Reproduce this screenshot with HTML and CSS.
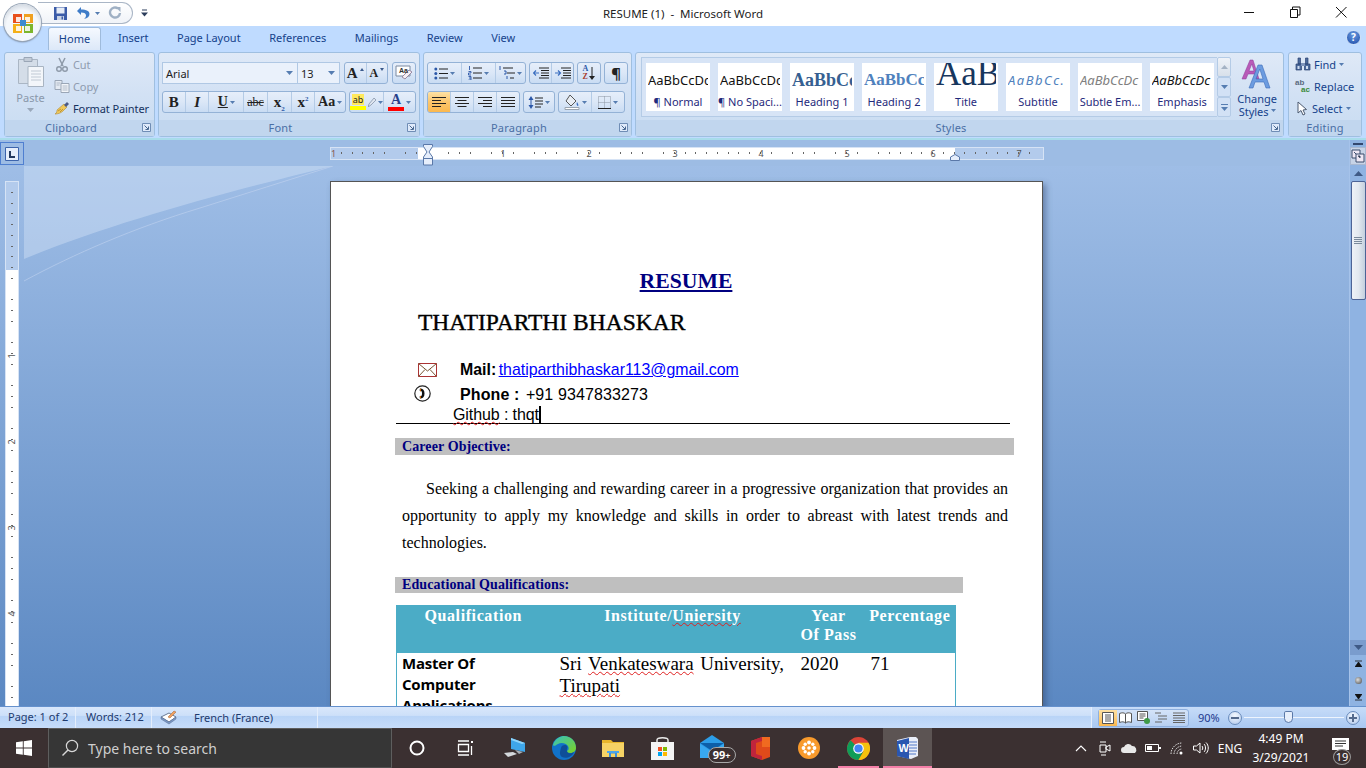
FILE: index.html
```html
<!DOCTYPE html>
<html lang="en">
<head>
  <meta charset="UTF-8">
  <title>RESUME (1) - Microsoft Word</title>
  <link rel="stylesheet" href="styles.css">
</head>
<body>

<svg class="defs" width="0" height="0">
  <symbol id="launch" viewBox="0 0 9 9"><path d="M.5.5h8v8h-8z" fill="#dfeafa" stroke="#6f8db5"/><path d="M2.5 2.5l3.5 3.5M6.5 3.5v3h-3" fill="none" stroke="#47678f"/></symbol>
  <symbol id="drop" viewBox="0 0 7 4"><path d="M0 0h7L3.5 4z" fill="#567db1"/></symbol>
</svg>

<!-- barra de titulo -->
<header class="titlebar">
  <div class="office-btn">
    <svg width="26" height="24" viewBox="0 0 24 24">
      <path d="M2 3h9v9H2z" fill="#e8501c"/><path d="M13 3h9v9h-9z" fill="#f0a020"/><path d="M2 13h9v9H2z" fill="#f4b018"/><path d="M13 13h9v9h-9z" fill="#7cb52c"/>
      <path d="M5 6h5v5H5zM14 15h5v5h-5zM5 15h5v5H5zM14 6h5v5h-5z" fill="#fff" fill-opacity=".85"/>
      <path d="M9 9h6v6H9z" fill="#3c8ad0"/>
    </svg>
  </div>
  <div class="qat">
    <svg width="15" height="15" viewBox="0 0 15 15"><path d="M1 1h13v13H1z" fill="#3c5ca8"/><path d="M3.5 1.5h8v6h-8z" fill="#e6ecf6"/><path d="M4 10h7v4H4z" fill="#c8d2e4"/><path d="M8.5 10.5h1.5v3H8.5z" fill="#3c5ca8"/></svg>
    <svg class="qat-undo" width="15" height="14" viewBox="0 0 15 14"><path d="M5 1L1 5l4 4V6.500c3.500 0 5 1 5 3 0 1.500-.8 2.600-2 3.500 3.500-.5 5.500-2.500 5.500-5 0-3-3-4.500-8.500-4.500z" fill="#3f7cc8"/></svg>
    <svg class="qat-drop" width="5" height="3"><use href="#drop"/></svg>
    <svg class="qat-redo" width="14" height="14" viewBox="0 0 14 14"><path d="M10 2.500A5 5 0 1 0 12 7" fill="none" stroke="#9fb0c4" stroke-width="2.400"/><path d="M7.500 1h5v5z" fill="#9fb0c4"/></svg>
  </div>
  <svg class="qat-more" width="7" height="8" viewBox="0 0 7 8"><path d="M1 1h5" stroke="#2c3e5c"/><path d="M0 3.500h7L3.500 7.500z" fill="#2c3e5c"/></svg>
  <div class="title">RESUME (1)&nbsp; -&nbsp; Microsoft Word</div>
  <div class="winctrls">
    <svg width="46" height="12"><path d="M18 6.500h10" stroke="#111"/></svg>
    <svg width="46" height="12"><path d="M18.500 3.500h7v8h-7zM20.500 3.500v-2.500h7.500v8h-2.500" fill="none" stroke="#111"/></svg>
    <svg width="46" height="12"><path d="M18 1l10.500 10.500M28.500 1L18 11.500" stroke="#111" fill="none"/></svg>
  </div>
</header>

<!-- pestañas -->
<nav class="tabs">
  <span class="tab active">Home</span>
  <span class="tab">Insert</span>
  <span class="tab">Page Layout</span>
  <span class="tab">References</span>
  <span class="tab">Mailings</span>
  <span class="tab">Review</span>
  <span class="tab">View</span>
  <span class="help">?</span>
</nav>

<!-- cinta -->
<section class="ribbon">

  <div class="group g-clip">
    <div class="group-body clip-body">
      <div class="paste">
        <svg width="28" height="32" viewBox="0 0 28 32">
          <path d="M1.500 3.500h19v24h-19z" fill="#d4dde8" stroke="#aab6c4"/>
          <path d="M7 1.500h8v4H7z" fill="#c3ccd8" stroke="#9aa6b6"/>
          <path d="M11 10.500h15.500v20H11z" fill="#f3f6fa" stroke="#a8b4c2"/>
          <path d="M14 15h10M14 18h10M14 21h10M14 24h10" stroke="#c0c9d4"/>
        </svg>
        <span class="paste-label">Paste</span>
        <svg width="7" height="4" viewBox="0 0 7 4"><path d="M0 0h7L3.500 4z" fill="#9aa8ba"/></svg>
      </div>
      <div class="clip-list">
        <div class="clip-row off">
          <svg width="14" height="15" viewBox="0 0 14 15"><path d="M4 1l4 8M10 1L6 9" stroke="#8d99a8" stroke-width="1.500" fill="none"/><circle cx="4" cy="12" r="2.300" fill="none" stroke="#8d99a8" stroke-width="1.400"/><circle cx="10" cy="12" r="2.300" fill="none" stroke="#8d99a8" stroke-width="1.400"/></svg>
          <span>Cut</span>
        </div>
        <div class="clip-row off">
          <svg width="15" height="13" viewBox="0 0 15 13"><path d="M.5.500h7v9h-7z" fill="#e4eaf2" stroke="#9aa6b6"/><path d="M6.500 3.500h8v9h-8z" fill="#f2f5f9" stroke="#9aa6b6"/><path d="M8 6h5M8 8h5M8 10h5M2 3h4M2 5h3" stroke="#b0bac8"/></svg>
          <span>Copy</span>
        </div>
        <div class="clip-row">
          <svg width="16" height="14" viewBox="0 0 16 14"><path d="M10 3l3 3-4 4c-2 2-5 3-8 3 2-1 2-3 2-4z" fill="#f0c85a" stroke="#b08a30" stroke-width=".6"/><path d="M10 4l3-3 2 2-3 3z" fill="#4a5a88"/><path d="M4 10l3-2M6 11l3-3" stroke="#a88028" stroke-width=".7"/></svg>
          <span>Format Painter</span>
        </div>
      </div>
    </div>
    <div class="group-label">Clipboard<svg class="launch"><use href="#launch"/></svg></div>
  </div>

  <div class="group g-font">
    <div class="group-body tool-rows">
      <div class="tool-row">
        <div class="combo font-name"><span>Arial</span><svg width="7" height="4"><use href="#drop"/></svg></div>
        <div class="combo font-size"><span>13</span><svg width="7" height="4"><use href="#drop"/></svg></div>
        <div class="btn-set grow-set">
          <span class="seg glyph big">A<i class="up"></i></span>
          <span class="seg glyph small">A<i class="dn"></i></span>
        </div>
        <div class="btn-set clear-set">
          <span class="seg">
            <svg width="19" height="16" viewBox="0 0 19 16"><path d="M1 1h14v10H1z" fill="#fff" stroke="#7a8aa0"/><path d="M10 14l7-7-3-2-7 7z" fill="#f6f0f4" stroke="#9a8aa4"/></svg>
            <b class="clear-text">Aa</b>
          </span>
        </div>
      </div>
      <div class="tool-row">
        <div class="btn-set format-set">
          <span class="seg glyph w22"><b>B</b></span>
          <span class="seg glyph w24"><em>I</em></span>
          <span class="seg glyph w35"><u>U</u><svg width="5" height="3"><use href="#drop"/></svg></span>
          <span class="seg glyph w24 strike">abc</span>
          <span class="seg glyph w24"><b>x<sub>2</sub></b></span>
          <span class="seg glyph w24"><b>x<sup>2</sup></b></span>
          <span class="seg glyph w31 case">Aa<svg width="5" height="3"><use href="#drop"/></svg></span>
        </div>
        <div class="btn-set color-set">
          <span class="seg w34">
            <span class="swatch"><small>ab</small><i class="bar yellow"></i></span>
            <svg width="8" height="9" viewBox="0 0 8 9"><path d="M6 0l2 2-5 5-3 2 1-3z" fill="#dfe6f0" stroke="#7a8aa0" stroke-width=".7"/></svg>
            <svg width="5" height="3"><use href="#drop"/></svg>
          </span>
          <span class="seg w33">
            <span class="swatch"><b class="font-a">A</b><i class="bar red"></i></span>
            <svg width="5" height="3"><use href="#drop"/></svg>
          </span>
        </div>
      </div>
    </div>
    <div class="group-label">Font<svg class="launch"><use href="#launch"/></svg></div>
  </div>

  <div class="group g-para">
    <div class="group-body tool-rows">
      <div class="tool-row gap3">
        <div class="btn-set">
          <span class="seg w33">
            <svg width="14" height="13" viewBox="0 0 14 13"><path d="M5 2h9M5 6.500h9M5 11h9" stroke="#222" /><circle cx="1.800" cy="2" r="1.500" fill="#2c58a8"/><circle cx="1.800" cy="6.500" r="1.500" fill="#2c58a8"/><circle cx="1.800" cy="11" r="1.500" fill="#2c58a8"/></svg>
            <svg width="5" height="3"><use href="#drop"/></svg>
          </span>
          <span class="seg w34">
            <svg width="14" height="14" viewBox="0 0 14 14"><path d="M5 2h9M5 7h9M5 12h9" stroke="#222"/><path d="M1.500 0v4M.5 5.500h2.500v1.500H.5V9H3M.5 10.500H3V12H1M3 12v2H.5" fill="none" stroke="#2c58a8" stroke-width=".9"/></svg>
            <svg width="5" height="3"><use href="#drop"/></svg>
          </span>
          <span class="seg w30">
            <svg width="16" height="14" viewBox="0 0 16 14"><path d="M4 2h10M8 7h8M11 12h4" stroke="#222"/><path d="M1 0v4M5 5h2v3H5M8 10v3" fill="none" stroke="#2c58a8"/></svg>
            <svg width="5" height="3"><use href="#drop"/></svg>
          </span>
        </div>
        <div class="btn-set">
          <span class="seg w21">
            <svg width="16" height="13" viewBox="0 0 16 13"><path d="M6 1h10M8 3.500h8M8 6h8M8 8.500h8M6 11h10" stroke="#222"/><path d="M6 6H1M3 3.500L.5 6 3 8.500" fill="none" stroke="#3a6ec0" stroke-width="1.200"/></svg>
          </span>
          <span class="seg w22">
            <svg width="16" height="13" viewBox="0 0 16 13"><path d="M6 1h10M8 3.500h8M8 6h8M8 8.500h8M6 11h10" stroke="#222"/><path d="M0 6h5M3 3.500L5.500 6 3 8.500" fill="none" stroke="#3a6ec0" stroke-width="1.200"/></svg>
          </span>
        </div>
        <div class="btn-set">
          <span class="seg w22 sort"><span class="az"><i>A</i><i>Z</i></span><svg width="6" height="13" viewBox="0 0 6 13"><path d="M3 0v11" stroke="#222"/><path d="M0 9h6l-3 4z" fill="#222"/></svg></span>
        </div>
        <div class="btn-set">
          <span class="seg w22 pilcrow">¶</span>
        </div>
      </div>
      <div class="tool-row gap3">
        <div class="btn-set">
          <span class="seg w22 on"><svg width="14" height="11" viewBox="0 0 14 11"><path d="M0 .5h14M0 3.500h9M0 6.500h14M0 9.500h9" stroke="#222"/></svg></span>
          <span class="seg w23"><svg width="14" height="11" viewBox="0 0 14 11"><path d="M0 .5h14M2.500 3.500h9M0 6.500h14M2.500 9.500h9" stroke="#222"/></svg></span>
          <span class="seg w23"><svg width="14" height="11" viewBox="0 0 14 11"><path d="M0 .5h14M5 3.500h9M0 6.500h14M5 9.500h9" stroke="#222"/></svg></span>
          <span class="seg w23"><svg width="14" height="11" viewBox="0 0 14 11"><path d="M0 .5h14M0 3.500h14M0 6.500h14M0 9.500h14" stroke="#222"/></svg></span>
        </div>
        <div class="btn-set">
          <span class="seg w30">
            <svg width="15" height="15" viewBox="0 0 15 15"><path d="M3 1L.5 5h5zM3 14L.5 10h5z" fill="#2c58a8"/><path d="M3 4v7" stroke="#2c58a8"/><path d="M7 3h8M7 6h8M7 9h8M7 12h6" stroke="#222"/></svg>
            <svg width="5" height="3"><use href="#drop"/></svg>
          </span>
        </div>
        <div class="btn-set">
          <span class="seg w32">
            <svg width="16" height="16" viewBox="0 0 16 16"><path d="M6 1l6 6-5 5-5-5z" fill="#e8edf4" stroke="#555"/><path d="M13 8c1 2 2 3 1 4-1 0-2-2-1-4z" fill="#3a6ec0"/><path d="M1 13.500h14v2H1z" fill="#fff" stroke="#9aa4b0"/></svg>
            <svg width="5" height="3"><use href="#drop"/></svg>
          </span>
          <span class="seg w33">
            <svg width="13" height="13" viewBox="0 0 13 13"><path d="M.5.500h12v12H.5zM6.500.5v12M.5 6.500h12" fill="none" stroke="#8a94a2" stroke-dasharray="1 1"/><path d="M0 12.500h13" stroke="#222"/></svg>
            <svg width="5" height="3"><use href="#drop"/></svg>
          </span>
        </div>
      </div>
    </div>
    <div class="group-label">Paragraph<svg class="launch"><use href="#launch"/></svg></div>
  </div>

  <div class="group g-styles">
    <div class="group-body styles-body">
      <div class="gallery">
        <div class="tile"><span class="sample s-normal">AaBbCcDc</span><span class="cap">¶ Normal</span></div>
        <div class="tile"><span class="sample s-normal">AaBbCcDc</span><span class="cap">¶ No Spaci...</span></div>
        <div class="tile"><span class="sample s-h1">AaBbCc</span><span class="cap">Heading 1</span></div>
        <div class="tile"><span class="sample s-h2">AaBbCc</span><span class="cap">Heading 2</span></div>
        <div class="tile"><span class="sample s-title">AaB</span><span class="cap">Title</span></div>
        <div class="tile"><span class="sample s-sub">AaBbCc.</span><span class="cap">Subtitle</span></div>
        <div class="tile"><span class="sample s-subtle">AaBbCcDc</span><span class="cap">Subtle Em...</span></div>
        <div class="tile"><span class="sample s-emph">AaBbCcDc</span><span class="cap">Emphasis</span></div>
      </div>
      <div class="gallery-scroll">
        <span class="off-up"><svg width="7" height="4" viewBox="0 0 7 4"><path d="M0 4h7L3.500 0z" fill="#a4b2c4"/></svg></span>
        <span><svg width="7" height="4"><use href="#drop"/></svg></span>
        <span class="more"><svg width="7" height="7" viewBox="0 0 7 7"><path d="M0 .5h7" stroke="#567db1"/><path d="M0 3h7L3.500 7z" fill="#567db1"/></svg></span>
      </div>
      <div class="change-styles">
        <svg width="32" height="30" viewBox="0 0 32 30">
          <path d="M1 20L9 1h3l6 19h-3l-1.500-5H7l-2 5zM8 12h5l-2.200-7z" fill="#b85ab8" stroke="#8a3a98" stroke-width=".5"/>
          <path d="M8 29L17 6h4l8 23h-4l-2-6h-9l-2 6zM15 20h7l-3.200-10z" fill="#6c9ce0" stroke="#3c6cb8" stroke-width=".6"/>
        </svg>
        <span>Change</span>
        <span>Styles <svg width="5" height="3"><use href="#drop"/></svg></span>
      </div>
    </div>
    <div class="group-label">Styles<svg class="launch"><use href="#launch"/></svg></div>
  </div>

  <div class="group g-edit">
    <div class="group-body edit-body">
      <div class="edit-row">
        <svg width="16" height="14" viewBox="0 0 16 14"><path d="M1 7h5.500v6H1zM9.500 7H15v6H9.500zM3 1h2.500v6H3zM10.500 1H13v6h-2.500z" fill="#4c6a9c" stroke="#2c4272" stroke-width=".7"/><path d="M6 6h4v3H6z" fill="#7e94ba"/><path d="M2.500 9h2v3h-2zM11 9h2v3h-2z" fill="#cfdcf0"/></svg>
        <span>Find</span><svg width="5" height="3"><use href="#drop"/></svg>
      </div>
      <div class="edit-row">
        <span class="replace-ico"><i>ab</i><i class="ac">ac</i></span>
        <span>Replace</span>
      </div>
      <div class="edit-row">
        <svg width="14" height="15" viewBox="0 0 14 15"><path d="M3 1v11l3-2.500 2 4.500 2-1-2-4 3.500-.5z" fill="#fff" stroke="#4c5a70"/></svg>
        <span>Select</span><svg width="5" height="3"><use href="#drop"/></svg>
      </div>
    </div>
    <div class="group-label no-launch">Editing</div>
  </div>
</section>

<!-- area de trabajo -->
<main class="workspace">
  <div class="ruler-row">
    <div class="tab-stop"><svg width="14" height="14" viewBox="0 0 14 14"><path d="M.5.500h13v13H.5z" fill="#e6eefb" stroke="#3c64ac"/><path d="M5 4v6h5" fill="none" stroke="#23395f" stroke-width="2"/></svg></div>
    <div class="h-ruler">
      <span class="rn first">1</span>
      <span class="rn">1</span><span class="rn">2</span><span class="rn">3</span><span class="rn">4</span><span class="rn">5</span><span class="rn">6</span><span class="rn">7</span>
      <svg class="indent-l" width="10" height="22" viewBox="0 0 10 22"><path d="M.5.500h9v2L6 8l3.500 5v8h-9v-8L4 8 .5 2.500z" fill="#e6eefb" stroke="#5a78a8"/><path d="M.5 14.500h9" stroke="#5a78a8"/></svg>
      <svg class="indent-r" width="10" height="7" viewBox="0 0 10 7"><path d="M.5 6.500V3L5 .5 9.500 3v3.500z" fill="#e6eefb" stroke="#5a78a8"/></svg>
    </div>
  </div>

  <div class="v-ruler">
    <div class="v-track">
      <span class="vn"><i>1</i></span><span class="vn"><i>2</i></span><span class="vn"><i>3</i></span><span class="vn"><i>4</i></span>
    </div>
  </div>

  <div class="canvas">
    <svg class="swoosh" width="310" height="120" viewBox="0 0 310 120">
      <path d="M0 0h309C210 24 90 56 0 93z" fill="#d6e4f7" fill-opacity=".42"/>
      <path d="M0 115C50 88 110 62 176 42 220 28 265 14 309 0" fill="none" stroke="#c4d6f0" stroke-opacity=".55"/>
    </svg>

    <article class="page">
      <h1 class="doc-title">RESUME</h1>
      <h2 class="doc-name">THATIPARTHI BHASKAR</h2>

      <div class="contact c-mail">
        <svg class="c-ico" width="20" height="14" viewBox="0 0 20 14"><path d="M.5.500h18v13H.5z" fill="#fff" stroke="#a33"/><path d="M.5.500L9.500 8l9-7.500M.5 13.500L7 6.500M18.500 13.500L12 6.500" fill="none" stroke="#753"/></svg>
        <span><b>Mail:</b> <a class="link">thatiparthibhaskar113@gmail.com</a></span>
      </div>
      <div class="contact c-phone">
        <svg class="c-ico" width="17" height="17" viewBox="0 0 17 17"><circle cx="8.500" cy="8.500" r="7.700" fill="#fff" stroke="#222" stroke-width="1.200"/><path d="M6 3.500c3 0 4.500 1.500 4.500 5s-1.500 5-4.500 5l-.5-2c2 0 2.500-1 2.500-3s-.5-3-2.500-3z" fill="#111"/><path d="M6 3.800l1-.2v2.600l-1 .2zM6 10.800l1 .2v2.300l-1 .2z" fill="#c60"/></svg>
        <span><b>Phone :</b> +91 9347833273</span>
      </div>
      <div class="github"><span class="spell">Github</span> : thqt<span class="caret"></span></div>

      <div class="section-bar">Career Objective:</div>
      <p class="objective">Seeking a challenging and rewarding career in a progressive organization that provides an opportunity to apply my knowledge and skills in order to abreast with latest trends and technologies.</p>

      <div class="section-bar short">Educational Qualifications:</div>
      <table class="edu">
        <colgroup><col class="c1"><col class="c2"><col class="c3"><col class="c4"></colgroup>
        <thead>
          <tr>
            <th class="h1">Qualification</th>
            <th class="h2">Institute/<span class="spell">Uniersity</span></th>
            <th class="year">Year<br><span>Of Pass</span></th>
            <th>Percentage</th>
          </tr>
        </thead>
        <tbody>
          <tr>
            <td class="degree">Master Of<br>Computer<br>Applications</td>
            <td class="inst"><span class="spell-tight">Sri <span class="spell">Venkateswara</span> University,</span><br><span class="spell">Tirupati</span></td>
            <td>2020</td>
            <td>71</td>
          </tr>
        </tbody>
      </table>
    </article>
  </div>

  <aside class="scrollbar">
    <span class="split"></span>
    <span class="ruler-toggle"><svg width="14" height="14" viewBox="0 0 14 14"><path d="M1 1h8v8H1z" fill="#efe8f4" stroke="#3a4c6c"/><path d="M5 5h8v8H5z" fill="#efe8f4" stroke="#3a4c6c"/><path d="M3 3l2 2M7 7h2v2" stroke="#3a4c6c"/></svg></span>
    <span class="sb-up"><svg width="9" height="5" viewBox="0 0 9 5"><path d="M0 5h9L4.500 0z" fill="#3f5a86"/></svg></span>
    <span class="thumb"><i></i></span>
    <span class="sb-fill"></span>
    <span class="sb-down"><svg width="9" height="5" viewBox="0 0 9 5"><path d="M0 0h9L4.500 5z" fill="#3f5a86"/></svg></span>
    <span class="sb-nav"><svg width="7" height="7" viewBox="0 0 7 7"><path d="M0 1h7M0 7h7L3.500 2z" stroke="#111" fill="#111" stroke-width=".8"/></svg></span>
    <span class="sb-nav"><i class="dot"></i></span>
    <span class="sb-nav"><svg width="7" height="7" viewBox="0 0 7 7"><path d="M0 6h7M0 0h7L3.500 5z" stroke="#111" fill="#111" stroke-width=".8"/></svg></span>
  </aside>
</main>

<!-- barra de estado -->
<footer class="statusbar">
  <span class="st w76">Page: 1 of 2</span>
  <span class="st w76 words">Words: 212</span>
  <span class="st lang">
    <svg width="17" height="15" viewBox="0 0 17 15"><path d="M1 7l8-4 7 4-7 5z" fill="#fff" stroke="#6a7a94"/><path d="M1 7v2l8 5 7-5V7l-7 5z" fill="#7a98c8" stroke="#5a6c8c" stroke-width=".5"/><path d="M8 7l6-6 2 1-6 6z" fill="#f0a060" stroke="#a06030" stroke-width=".5"/></svg>
    <span>French (France)</span>
  </span>
  <span class="st spring"></span>
  <div class="st-right">
    <div class="views">
      <span class="on"><svg width="12" height="12" viewBox="0 0 12 12"><path d="M.5.500h11v11H.5z" fill="#fff" stroke="#555"/><path d="M3 3h6M3 5h6M3 7h6M3 9h6" stroke="#555"/></svg></span>
      <span><svg width="13" height="12" viewBox="0 0 13 12"><path d="M.5 1.500C3 .5 5 .5 6.500 2 8 .5 10 .5 12.500 1.500v9C10 9.500 8 9.500 6.500 11 5 9.500 3 9.500.5 10.500z" fill="#fff" stroke="#555"/><path d="M6.500 2v9" stroke="#555"/></svg></span>
      <span><svg width="13" height="13" viewBox="0 0 13 13"><path d="M.5.500h10v9H.5z" fill="#fff" stroke="#555"/><path d="M2.500 3h6M2.500 5h6M2.500 7h4" stroke="#555"/><circle cx="10" cy="10" r="3" fill="#3f9a48"/></svg></span>
      <span><svg width="12" height="12" viewBox="0 0 12 12"><path d="M0 1h6M3 4h9M3 7h9M0 10h7" stroke="#666"/></svg></span>
      <span><svg width="12" height="11" viewBox="0 0 12 11"><path d="M0 1h12M0 3.500h12M0 6h12M0 8.500h12M0 10.500h12" stroke="#666"/></svg></span>
    </div>
    <span class="zoom-pct">90%</span>
    <span class="zoom-btn"><i class="minus"></i></span>
    <span class="zoom-track"><i class="zoom-thumb"></i></span>
    <span class="zoom-btn"><i class="minus"></i><i class="plus"></i></span>
  </div>
</footer>

<!-- barra de tareas -->
<div class="taskbar">
  <span class="start">
    <svg width="16" height="16" viewBox="0 0 16 16"><path d="M0 2.300L6.800 1.300V7.600H0zM7.700 1.200L16 0V7.600H7.700zM0 8.500H6.800V14.700L0 13.700zM7.700 8.500H16V16L7.700 14.800z" fill="#fff"/></svg>
  </span>
  <div class="search">
    <svg width="18" height="18" viewBox="0 0 18 18"><circle cx="11" cy="7" r="5.600" fill="none" stroke="#d8d8d8" stroke-width="1.200"/><path d="M7 11l-5.500 5.500" stroke="#d8d8d8" stroke-width="1.400"/></svg>
    <span>Type here to search</span>
  </div>
  <span class="tb-item"><svg width="16" height="16" viewBox="0 0 16 16"><circle cx="8" cy="8" r="6.500" fill="none" stroke="#fff" stroke-width="2"/></svg></span>
  <span class="tb-item"><svg width="17" height="16" viewBox="0 0 17 16"><path d="M1 1h11M1 15h11M1.500 4.500h10v7h-10zM14.500 6v9" fill="none" stroke="#fff" stroke-width="1.300"/><path d="M14 1h2v2h-2z" fill="#fff"/></svg></span>
  <span class="tb-item"><svg width="24" height="22" viewBox="0 0 24 22"><path d="M8 1l14 5v9l-14-3z" fill="#3ea6ea"/><path d="M8 1l14 5-3 1-11-4z" fill="#8ed4fa"/><path d="M1 16l9-1 4 2-9 3z" fill="#d4d8dc"/><path d="M12 13l8 2-4 2z" fill="#a8b0b8"/></svg></span>
  <span class="tb-item"><svg width="24" height="24" viewBox="0 0 24 24"><defs><linearGradient id="edge1" x1="0" y1="0" x2="1" y2="1"><stop offset="0" stop-color="#35c1c0"/><stop offset="1" stop-color="#7ed321"/></linearGradient></defs><circle cx="12" cy="12" r="12" fill="#1172c9"/><path d="M1 9C3 2 9 0 12 0c7 0 12 5 12 12 0 3-3 5-6 5-2 0-3-1-3-2 2-1 2-3 1-5-2-3-7-4-10-2-2 1-4 3-5 1z" fill="url(#edge1)"/><path d="M9 12c0-2 2-3 4-3s3 2 2 4c-1 3 2 6 7 3-2 5-8 7-12 5-3-2-2-6-1-9z" fill="#0f4e98"/></svg></span>
  <span class="tb-item"><svg width="22" height="18" viewBox="0 0 22 18"><path d="M0 1h9l2 2h11v15H0z" fill="#e8b62c"/><path d="M0 4h22v14H0z" fill="#f6d365"/><path d="M7 12h8v6H7z" fill="#3a8fd8"/><path d="M9 14.500h4V18H9z" fill="#f6d365"/><path d="M5 12h12v2H5z" fill="#4aa4ec"/></svg></span>
  <span class="tb-item"><svg width="23" height="24" viewBox="0 0 23 24"><path d="M6 7V4c0-3 11-3 11 0v3" fill="none" stroke="#e8e8e8" stroke-width="1.500"/><path d="M0 6h23v18H0z" fill="#f4f4f4"/><path d="M7 11h4v4H7z" fill="#f25022"/><path d="M12 11h4v4h-4z" fill="#7fba00"/><path d="M7 16h4v4H7z" fill="#00a4ef"/><path d="M12 16h4v4h-4z" fill="#ffb900"/></svg></span>
  <span class="tb-item tb-mail">
    <svg width="24" height="23" viewBox="0 0 24 23"><path d="M0 8L12 0l12 8v15H0z" fill="#2c9de8"/><path d="M0 8h24L12 16z" fill="#0d5fa8"/><path d="M0 9l12 8 12-8v14H0z" fill="#38a8f0"/></svg>
    <span class="badge-99">99<small>+</small></span>
  </span>
  <span class="tb-item"><svg width="19" height="23" viewBox="0 0 19 23"><path d="M0 4l11-4h8v20l-8 3-11-4z" fill="#e04a1a"/><path d="M0 4l11-4v4L5 6v11l6 2v4L0 19z" fill="#c0243c"/><path d="M11 0h8v10h-8z" fill="#f06a20"/></svg></span>
  <span class="tb-item"><svg width="22" height="22" viewBox="0 0 22 22"><circle cx="11" cy="11" r="11" fill="#f89a2c"/><g fill="#fff"><circle cx="11" cy="11" r="1.800"/><circle cx="11" cy="5.500" r="1.900"/><circle cx="11" cy="16.500" r="1.900"/><circle cx="5.500" cy="11" r="1.900"/><circle cx="16.500" cy="11" r="1.900"/><circle cx="7.200" cy="7.200" r="1.700"/><circle cx="14.800" cy="7.200" r="1.700"/><circle cx="7.200" cy="14.800" r="1.700"/><circle cx="14.800" cy="14.800" r="1.700"/></g></svg></span>
  <span class="tb-item under"><svg width="23" height="23" viewBox="0 0 24 24"><circle cx="12" cy="12" r="12" fill="#db4437"/><path d="M12 12L1.600 18A12 12 0 0 1 3.700 3.300z" fill="#0f9d58"/><path d="M12 24A12 12 0 0 1 1.600 18L7 9l5 3 5 3z" fill="#0f9d58"/><path d="M12 6h10.400A12 12 0 0 1 12 24l5.200-9z" fill="#f4c20d"/><circle cx="12" cy="12" r="5.500" fill="#fff"/><circle cx="12" cy="12" r="4.300" fill="#4285f4"/></svg></span>
  <span class="tb-item under active"><svg width="24" height="23" viewBox="0 0 24 23"><path d="M2 3L15 0h6l2 2v17l-7 3-14-3z" fill="#e9eef8"/><path d="M2 4l12-3v21L2 19z" fill="#2a56b0"/><path d="M14 5h8M14 8h8M14 11h8M14 14h8M14 17h7" stroke="#5078c8"/><text x="3.500" y="15" font-family="Liberation Sans" font-size="11" font-weight="bold" fill="#fff">W</text></svg></span>

  <div class="tray">
    <span class="tr"><svg width="12" height="7" viewBox="0 0 12 7"><path d="M1 6l5-5 5 5" fill="none" stroke="#fff" stroke-width="1.100"/></svg></span>
    <span class="tr"><svg width="12" height="16" viewBox="0 0 12 16"><path d="M1 5h6v7H1zM7 7l4-2v6l-4-2zM1 2h6M2 15h5" fill="none" stroke="#fff"/></svg></span>
    <span class="tr"><svg width="17" height="10" viewBox="0 0 17 10"><path d="M3 10a3 3 0 0 1 0-6 4.500 4.500 0 0 1 8-1 4 4 0 0 1 3 7z" fill="#e8e8e8"/></svg></span>
    <span class="tr"><svg width="16" height="8" viewBox="0 0 16 8"><path d="M.5.500h13v7H.5z" fill="none" stroke="#fff"/><path d="M2 2h5v4H2z" fill="#fff"/><path d="M14 3h2v2h-2z" fill="#fff"/></svg></span>
    <span class="tr"><svg width="14" height="13" viewBox="0 0 14 13"><path d="M1 12C1 6 6 1 12 1M4 12c0-4 4-8 8-8M7 12c0-2.500 2-5 5-5" fill="none" stroke="#ddd" stroke-dasharray="1.500 1"/><circle cx="11" cy="11" r="1.500" fill="#fff"/></svg></span>
    <span class="tr"><svg width="16" height="12" viewBox="0 0 16 12"><path d="M.5 4h3L7 1v10L3.500 8h-3z" fill="none" stroke="#fff"/><path d="M9 4c1 1 1 3 0 4M11 2c2 2 2 6 0 8M13 .5c3 3 3 8 0 11" fill="none" stroke="#fff"/></svg></span>
    <span class="tray-lang">ENG</span>
    <span class="clock"><span>4:49 PM</span><span>3/29/2021</span></span>
    <span class="notify">
      <svg width="17" height="16" viewBox="0 0 17 16"><path d="M0 0h17v12H8l-3 4v-4H0z" fill="#fff"/><path d="M3 3h11M3 5.500h11M3 8h8" stroke="#333"/></svg>
      <span class="count">19</span>
    </span>
  </div>
</div>

</body>
</html>
```

FILE: styles.css
```css
/* general */
html, body {
  margin: 0;
  height: 100%;
}
body {
  width: 1366px;
  height: 768px;
  overflow: hidden;
  display: flex;
  flex-direction: column;
  font-family: "Noto Sans", "Open Sans", sans-serif;
  font-size: 11px;
  color: #15428b;
  background: #bfdbff;
  position: relative;
}
svg {
  display: block;
  flex: none;
}
.defs {
  position: absolute;
}

/* title bar */
.titlebar {
  height: 26px;
  flex: none;
  background: #fff;
  display: flex;
  align-items: center;
  position: relative;
}
.office-btn {
  position: absolute;
  left: 4px;
  top: 4px;
  width: 37px;
  height: 37px;
  border-radius: 50%;
  z-index: 3;
  display: flex;
  align-items: center;
  justify-content: center;
  background: radial-gradient(circle at 50% 60%, #f4f7fb 55%, #aeb9c6 100%);
  box-shadow: 0 0 0 1px #9aa7b8, 0 1px 2px #5a6a80;
}
.qat {
  margin-left: 38px;
  width: 95px;
  height: 22px;
  box-sizing: border-box;
  padding-left: 15px;
  display: flex;
  align-items: center;
  border: 1px solid #aab6c6;
  border-left: none;
  border-radius: 0 12px 12px 0;
  background: linear-gradient(#fff, #f0f3f8);
}
.qat-undo { margin-left: 8px; }
.qat-drop { margin-left: 4px; }
.qat-redo { margin-left: 8px; }
.qat-more { margin-left: 8px; }
.title {
  position: absolute;
  left: 0;
  right: 0;
  text-align: center;
  font-size: 11.5px;
  color: #222;
  white-space: pre;
}
.winctrls {
  margin-left: auto;
  margin-right: 2px;
  display: flex;
  margin-top: -3px;
}

/* tabs */
.tabs {
  height: 24px;
  flex: none;
  padding-left: 48px;
  display: flex;
  align-items: center;
  position: relative;
}
.tab {
  margin-right: 28.5px;
  line-height: 26px;
}
.tab.active {
  width: 53px;
  margin-right: 17px;
  text-align: center;
  align-self: flex-end;
  height: 23px;
  border: 1px solid #9fbbdc;
  border-bottom: none;
  border-radius: 3px 3px 0 0;
  box-sizing: border-box;
  line-height: 22px;
  background: linear-gradient(#f5f9ff, #dce8f8);
}
.help {
  margin-left: auto;
  margin-right: 5px;
  margin-top: -2px;
  width: 13px;
  height: 13px;
  line-height: 13px;
  border-radius: 50%;
  border: 1px solid #cfe0f6;
  background: radial-gradient(circle at 50% 30%, #6a9ae0, #1a4aa8);
  color: #fff;
  font-weight: bold;
  font-size: 10px;
  text-align: center;
}

/* ribbon */
.ribbon {
  height: 90px;
  flex: none;
  box-sizing: border-box;
  padding: 2px 4px 1px;
  display: flex;
  gap: 3px;
  border-bottom: 2px solid #a8dcea;
}
.group {
  box-sizing: border-box;
  border: 1px solid #9fbfe0;
  border-radius: 3px;
  display: flex;
  flex-direction: column;
  background: linear-gradient(#dfe9f7, #d2e1f4 50%, #c8dcf2);
}
.g-clip { width: 151px; }
.g-font { width: 262px; }
.g-para { width: 209px; }
.g-styles { width: 649px; }
.g-edit { width: 74px; margin-left: 1px; }
.group-body {
  flex: 1;
  min-height: 0;
}
.group-label {
  height: 16px;
  flex: none;
  box-sizing: border-box;
  padding-right: 17px;
  line-height: 16px;
  letter-spacing: 0.2px;
  text-align: center;
  color: #4a6fa5;
  background: #c1d6ee;
  position: relative;
}
.group-label.no-launch { padding-right: 0; }
.launch {
  position: absolute;
  right: 3px;
  top: 3px;
  width: 9px;
  height: 9px;
}

/* clipboard */
.clip-body {
  display: flex;
  padding: 3px 0 0 11px;
}
.paste {
  width: 29px;
  display: flex;
  flex-direction: column;
  align-items: center;
  color: #8a98aa;
}
.paste-label {
  line-height: 14px;
  margin-top: 3px;
  margin-bottom: 3px;
}
.clip-list {
  margin-left: 9px;
  display: flex;
  flex-direction: column;
  margin-top: -3px;
}
.clip-row {
  height: 22px;
  display: flex;
  align-items: center;
  gap: 3px;
  color: #15325f;
  white-space: nowrap;
  letter-spacing: -0.1px;
}
.clip-row svg { width: 16px; }
.clip-row.off { color: #8f9caf; }

/* tool rows */
.tool-rows {
  padding: 9px 3px 0;
  display: flex;
  flex-direction: column;
  gap: 7px;
}
.tool-row {
  display: flex;
  height: 22px;
}
.gap3 { gap: 3px; }
.combo {
  box-sizing: border-box;
  height: 22px;
  display: flex;
  align-items: center;
  justify-content: space-between;
  padding: 0 4px 0 3px;
  background: #eaf1fb;
  border: 1px solid #b0c8e4;
  color: #222;
}
.font-name { width: 136px; }
.font-size { width: 42px; border-left: none; }
.btn-set {
  display: flex;
  height: 22px;
  box-sizing: border-box;
  border: 1px solid #94b2d6;
  border-radius: 3px;
  background: linear-gradient(#e6eefa, #dbe7f7 50%, #c9dcf3);
}
.grow-set { margin-left: 4px; width: 44px; }
.clear-set { margin-left: 4px; width: 24px; }
.format-set { width: 184px; }
.color-set { margin-left: 3px; width: 67px; }
.seg {
  display: flex;
  align-items: center;
  justify-content: center;
  gap: 2px;
  border-left: 1px solid #b4cbe6;
  box-sizing: border-box;
  height: 20px;
  color: #222;
  position: relative;
}
.seg:first-child { border-left: none; }
.seg.on {
  background: linear-gradient(#fde1a4, #fbc56c 50%, #fbb84e);
  border-radius: 2px 0 0 2px;
}
.w21 { width: 21px; }
.w22 { width: 22px; }
.w23 { width: 23px; }
.w24 { width: 24px; }
.w30 { width: 30px; }
.w31 { width: 31px; }
.w32 { width: 32px; }
.w33 { width: 33px; }
.w34 { width: 34px; }
.w35 { width: 35px; }
.glyph {
  font-family: "Liberation Serif", serif;
  font-size: 13px;
  color: #222;
}
.glyph b { font-size: 15px; }
.glyph em { font-size: 15px; font-weight: bold; }
.glyph u { font-size: 14px; font-weight: bold; }
.case { font-size: 14px; font-weight: bold; }
.big, .small { flex: 1; font-weight: bold; }
.big { font-size: 15px; }
.small { font-size: 12px; }
.up, .dn {
  width: 0;
  height: 0;
  border: 2px solid transparent;
  margin-bottom: 7px;
}
.up { border-bottom: 3px solid #3a5a8c; border-top: none; }
.dn { border-top: 3px solid #3a5a8c; border-bottom: none; }
.clear-set .seg { flex: 1; }
.clear-text {
  position: absolute;
  left: 6px;
  top: 4px;
  font: bold 7px "Liberation Sans", sans-serif;
  color: #333;
}
.strike {
  text-decoration: line-through;
  font-size: 12px;
}
.seg sub, .seg sup {
  font-size: 7px;
  color: #2c58a8;
  line-height: 0;
}
.swatch {
  display: flex;
  flex-direction: column;
  align-items: center;
  width: 16px;
}
.swatch small {
  font-size: 9px;
  line-height: 11px;
  padding: 0 1px;
  background: #ffe95c;
}
.bar {
  display: block;
  width: 16px;
  height: 4px;
  margin-top: 1px;
}
.yellow { background: #ffff00; }
.red { background: #ff0000; }
.font-a {
  font: bold 14px/12px "Liberation Serif", serif;
  color: #27408b;
}
.sort { gap: 1px; }
.az {
  display: flex;
  flex-direction: column;
  font: bold 8px/8px "Liberation Serif", serif;
}
.az i { font-style: normal; color: #2c58a8; }
.az i + i { color: #a83a2c; }
.pilcrow {
  font-size: 15px;
  font-weight: bold;
}

/* styles gallery */
.styles-body {
  display: flex;
  padding: 4px 0 0 5px;
}
.gallery {
  box-sizing: border-box;
  width: 579px;
  height: 60px;
  padding: 5px 0 0 4px;
  display: flex;
  gap: 8px;
  background: #d7e4f6;
  border: 1px solid #b4cbe6;
  border-right: none;
}
.tile {
  width: 64px;
  height: 48px;
  background: #fff;
  display: flex;
  flex-direction: column;
  align-items: center;
  overflow: hidden;
}
.sample {
  height: 31px;
  line-height: 34px;
  width: 60px;
  overflow: hidden;
  white-space: nowrap;
  color: #111;
  font-size: 13px;
  text-align: left;
  flex: none;
}
.cap {
  color: #1f2a7c;
  line-height: 15px;
  white-space: nowrap;
}
.s-h1 {
  font: bold 18px/34px "Liberation Serif", serif;
  color: #365f91;
}
.s-h2 {
  font: bold 17px/34px "Liberation Serif", serif;
  color: #4f81bd;
}
.s-title {
  font: 35px/22px "Liberation Serif", serif;
  color: #17365d;
}
.s-sub {
  font-style: italic;
  color: #4f81bd;
  letter-spacing: 1.5px;
  font-size: 13px;
}
.s-subtle {
  font-style: italic;
  color: #808080;
}
.s-emph { font-style: italic; }
.gallery-scroll {
  width: 14px;
  height: 60px;
  display: flex;
  flex-direction: column;
}
.gallery-scroll span {
  flex: 1;
  display: flex;
  align-items: center;
  justify-content: center;
  box-sizing: border-box;
  border: 1px solid #b4cbe6;
  background: #d2e1f5;
  border-radius: 2px;
}
.gallery-scroll .off-up { background: linear-gradient(#eef2f8, #d8e0ea); }
.change-styles {
  width: 52px;
  display: flex;
  flex-direction: column;
  align-items: center;
  line-height: 13px;
  margin-top: 2px;
}
.change-styles svg:first-child { margin-bottom: 3px; }
.change-styles span {
  display: flex;
  align-items: center;
  gap: 2px;
}

/* editing */
.edit-body {
  padding: 0 0 0 6px;
  display: flex;
  flex-direction: column;
}
.edit-row {
  height: 22px;
  display: flex;
  align-items: center;
  gap: 3px;
  white-space: nowrap;
}
.replace-ico {
  width: 16px;
  font: bold 8px/7px "Liberation Sans", sans-serif;
  display: flex;
  flex-direction: column;
  color: #5a6a80;
}
.replace-ico i { font-style: normal; }
.replace-ico .ac { color: #3a8a3a; margin-left: 6px; }

/* work area */
.workspace {
  flex: 1;
  min-height: 0;
  display: grid;
  grid-template-columns: 24px 1fr 17px;
  grid-template-rows: 26px 1fr;
  background: linear-gradient(#a2c0e8, #5b88c2);
}
.ruler-row {
  grid-column: 1 / 3;
  display: flex;
  align-items: center;
  background: #9dbce4;
  position: relative;
}
.tab-stop {
  width: 24px;
  height: 23px;
  box-sizing: border-box;
  border: 1px solid #4f7fd0;
  display: flex;
  align-items: center;
  justify-content: center;
  margin-top: 1px;
}
.h-ruler {
  margin-left: 306px;
  width: 714px;
  height: 13px;
  box-sizing: border-box;
  border: 1px solid #d6e3f5;
  display: flex;
  font-size: 9px;
  line-height: 11px;
  color: #555;
  position: relative;
  background:
    repeating-linear-gradient(90deg, transparent 0 9.75px, #666 9.75px 10.75px) 0 4px / 100% 2px no-repeat,
    linear-gradient(90deg, #b3cbec 87px, #fff 87px 624px, #b3cbec 624px);
}
.rn {
  width: 86px;
  text-align: center;
  flex: none;
  background: none;
}
.rn.first {
  width: 129px;
  text-align: left;
  color: #8a5a50;
}
.indent-l {
  position: absolute;
  left: 92px;
  top: -4px;
}
.indent-r {
  position: absolute;
  left: 619px;
  top: 6px;
}

/* vertical ruler */
.v-ruler {
  padding: 15px 0 0 5px;
  overflow: hidden;
}
.v-track {
  width: 14px;
  height: 560px;
  box-sizing: border-box;
  border: 1px solid #d6e3f5;
  border-bottom: none;
  padding-top: 131px;
  font-size: 9px;
  color: #555;
  background:
    repeating-linear-gradient(transparent 0 9.75px, #666 9.75px 10.75px) 5px 0 / 2px 100% no-repeat,
    linear-gradient(#b3cbec 88px, #fff 88px);
}
.vn {
  display: block;
  height: 86px;
  line-height: 86px;
  text-align: center;
}
.vn i {
  display: inline-block;
  font-style: normal;
  transform: rotate(-90deg);
}

/* canvas and page */
.canvas {
  position: relative;
  overflow: hidden;
  padding: 15px 0 0 306px;
}
.swoosh {
  position: absolute;
  left: 0;
  top: 0;
}
.page {
  position: relative;
  box-sizing: border-box;
  width: 713px;
  height: 800px;
  padding: 87px 28px 0 65px;
  background: #fff;
  border: 1px solid #555;
  box-shadow: 3px 3px 6px rgba(40, 60, 100, 0.45);
  color: #000;
  font-family: "Liberation Serif", serif;
}
.doc-title {
  margin: 0;
  padding-right: 38px;
  font-size: 21.7px;
  line-height: 24px;
  font-weight: bold;
  text-align: center;
  color: #000080;
  text-decoration: underline;
}
.doc-name {
  margin: 16px 0 0 22px;
  font-size: 23.5px;
  line-height: 26px;
  font-weight: normal;
  -webkit-text-stroke: 0.4px #000;
}
.contact {
  display: flex;
  align-items: center;
  font-family: "Liberation Sans", Arial, sans-serif;
  font-size: 16px;
  padding-left: 22px;
}
.contact .c-ico { margin-right: 22px; }
.c-mail {
  margin-top: 23px;
  line-height: 24px;
  font-size: 15.9px;
}
.c-mail b { margin-right: -2px; }
.c-phone {
  margin-top: 2px;
  line-height: 22px;
  letter-spacing: 0.1px;
}
.c-phone b { margin-right: 2px; }
.c-phone .c-ico {
  margin-left: -4px;
  margin-right: 29px;
  margin-top: -4px;
}
.link {
  color: #0000ff;
  text-decoration: underline;
}
.github {
  height: 17px;
  line-height: 15px;
  margin-right: 4px;
  padding-left: 57px;
  font-family: "Liberation Sans", Arial, sans-serif;
  font-size: 16px;
  letter-spacing: -0.1px;
  border-bottom: 1px solid #000;
}
.spell {
  text-decoration: underline wavy #e02020;
  text-decoration-thickness: 1px;
  text-underline-offset: 1px;
}
.caret {
  display: inline-block;
  width: 2px;
  height: 17px;
  background: #000;
  vertical-align: -3px;
}
.section-bar {
  margin: 14px 0 0 -1px;
  height: 17px;
  width: 619px;
  padding-left: 7px;
  box-sizing: border-box;
  background: #bfbfbf;
  color: #000080;
  font-size: 14px;
  line-height: 17px;
  font-weight: bold;
  letter-spacing: 0.1px;
}
.section-bar.short {
  margin-top: 21px;
  width: 568px;
  height: 16px;
  line-height: 16px;
}
.objective {
  margin: 20px 0 0;
  padding: 0 6px;
  font-size: 16px;
  line-height: 27px;
  text-align: justify;
  text-indent: 24px;
}
.edu {
  margin-top: 12px;
  width: 559px;
  border-collapse: collapse;
  table-layout: fixed;
  border: 1px solid #4bacc6;
}
.c1 { width: 157px; }
.c2 { width: 241px; }
.c3 { width: 70px; }
.c4 { width: 91px; }
.edu th {
  height: 47px;
  padding: 0;
  vertical-align: top;
  background: #4bacc6;
  color: #fff;
  font-size: 16px;
  letter-spacing: 0.6px;
  line-height: 19px;
  text-align: center;
  box-sizing: border-box;
}
.edu th.h1 { padding-right: 4px; }
.edu th.h2 { padding-right: 3px; }
.edu th.year { padding-right: 2px; }
.edu td {
  padding: 0 6px;
  vertical-align: top;
  font-size: 19px;
  line-height: 22px;
}
.edu td.degree {
  padding-left: 5px;
  font-family: "Open Sans", sans-serif;
  font-weight: bold;
  font-size: 15px;
  line-height: 21px;
  letter-spacing: -0.2px;
}
.edu td.inst { padding-right: 0; }
.spell-tight { word-spacing: 2px; }

/* scrollbar */
.scrollbar {
  grid-column: 3;
  grid-row: 1 / 3;
  display: flex;
  flex-direction: column;
  align-items: center;
  background: #8fb3e2;
  border-left: 1px solid #a6c3ea;
  box-sizing: border-box;
}
.split {
  width: 10px;
  height: 2px;
  margin-top: 3px;
  background: #33476e;
  flex: none;
}
.ruler-toggle {
  width: 16px;
  height: 18px;
  margin-top: 2px;
  flex: none;
  display: flex;
  align-items: center;
  justify-content: center;
  background: #c7d3e6;
  border: 1px solid #aab8d0;
  box-sizing: border-box;
}
.sb-up {
  height: 16px;
  flex: none;
  display: flex;
  align-items: center;
}
.thumb {
  width: 15px;
  height: 119px;
  flex: none;
  box-sizing: border-box;
  border: 1px solid #4d6496;
  border-radius: 2px;
  display: flex;
  align-items: center;
  justify-content: center;
  background: linear-gradient(90deg, #eef2f7, #e2e8ef 50%, #c4d0de);
}
.thumb i {
  width: 8px;
  height: 7px;
  background: repeating-linear-gradient(#7a8a9c 0 1px, transparent 1px 2px);
}
.sb-fill { flex: 1; }
.sb-down {
  height: 15px;
  width: 16px;
  flex: none;
  display: flex;
  align-items: center;
  justify-content: center;
  background: #7a9ccd;
}
.sb-nav {
  height: 17px;
  flex: none;
  display: flex;
  align-items: center;
  justify-content: center;
}
.dot {
  width: 7px;
  height: 7px;
  border-radius: 50%;
  background: radial-gradient(circle at 40% 40%, #ddd, #444);
}

/* status bar */
.statusbar {
  height: 22px;
  flex: none;
  box-sizing: border-box;
  display: flex;
  border-top: 1px solid #6591cd;
  background: linear-gradient(#d9e7fb, #cde0f9 40%, #b9d4f7 45%, #c6dcfa);
  color: #1f3a6e;
  line-height: 20px;
}
.st {
  box-sizing: border-box;
  border-right: 1px solid #e4eefc;
  padding-left: 8px;
  white-space: nowrap;
}
.w76 { width: 76px; }
.words { padding-left: 10px; }
.lang {
  width: 166px;
  display: flex;
  align-items: center;
}
.lang span { margin-left: 17px; }
.spring {
  flex: 1;
  border-right: none;
}
.st-right {
  width: 275px;
  display: flex;
  align-items: center;
  box-sizing: border-box;
  padding-left: 6px;
  border-left: 1px solid #e4eefc;
  background: linear-gradient(#c7dcf8, #a9c8f2);
}
.views {
  width: 91px;
  height: 18px;
  box-sizing: border-box;
  display: flex;
  border: 1px solid #8fb0de;
  border-radius: 3px;
  background: linear-gradient(#d4e3f8, #b8d0f2);
}
.views span {
  flex: 1;
  display: flex;
  align-items: center;
  justify-content: center;
}
.views .on { background: linear-gradient(#fde1a4, #fbb84e); }
.zoom-pct {
  margin-left: 9px;
  width: 24px;
  color: #1f3a8e;
  font-size: 11px;
}
.zoom-btn {
  width: 14px;
  height: 14px;
  margin-left: 6px;
  border-radius: 50%;
  border: 1px solid #6a8cbc;
  box-sizing: border-box;
  background: radial-gradient(circle at 50% 30%, #f4f8fe, #b0c8ec);
  position: relative;
  flex: none;
}
.minus, .plus {
  position: absolute;
  background: #556a8c;
}
.minus {
  left: 2px;
  top: 5px;
  width: 8px;
  height: 2px;
}
.plus {
  left: 5px;
  top: 2px;
  width: 2px;
  height: 8px;
}
.zoom-track {
  width: 100px;
  height: 1px;
  margin-left: 2px;
  margin-right: -4px;
  background: #eef4fd;
  position: relative;
  flex: none;
}
.zoom-thumb {
  position: absolute;
  left: 40px;
  top: -6px;
  width: 9px;
  height: 12px;
  box-sizing: border-box;
  border: 1px solid #5a78a8;
  border-radius: 2px 2px 5px 5px;
  background: #e6eefb;
}

/* taskbar */
.taskbar {
  height: 40px;
  flex: none;
  display: flex;
  align-items: center;
  background: #3b3031;
  color: #fff;
}
.start {
  width: 48px;
  display: flex;
  justify-content: center;
}
.search {
  width: 344px;
  height: 40px;
  box-sizing: border-box;
  display: flex;
  align-items: center;
  padding-left: 12px;
  background: #363636;
  border: 1px solid #5e5e5e;
  border-bottom-color: #4e4e4e;
  color: #cfcfcf;
  font-size: 14px;
}
.search span { margin-left: 9px; }
.tb-item {
  width: 49.1px;
  height: 40px;
  flex: none;
  display: flex;
  align-items: center;
  justify-content: center;
  position: relative;
}
.tb-item.under::after {
  content: "";
  position: absolute;
  left: 4px;
  right: 4px;
  bottom: 0;
  height: 2px;
  background: #f47fa8;
}
.tb-item.active { background: #5c5453; }
.tb-item.active::after {
  left: 0;
  right: 0;
}
.tb-mail svg {
  margin-top: -3px;
  margin-left: 1px;
}
.badge-99 {
  position: absolute;
  left: 21px;
  top: 19px;
  width: 28px;
  height: 16px;
  line-height: 14px;
  text-align: center;
  box-sizing: border-box;
  border: 1px solid #a8a8a8;
  border-radius: 8px;
  background: #3b3031;
  font-size: 11px;
  font-weight: bold;
}
.badge-99 small { font-size: 9px; }

/* tray */
.tray {
  margin-left: auto;
  display: flex;
  align-items: center;
  height: 40px;
}
.tr {
  width: 24px;
  display: flex;
  justify-content: center;
}
.tray-lang {
  width: 34px;
  text-align: center;
  font-size: 12px;
}
.clock {
  width: 68px;
  display: flex;
  flex-direction: column;
  align-items: center;
  font-size: 12px;
  line-height: 19px;
}
.notify {
  width: 51px;
  height: 40px;
  position: relative;
  display: flex;
  align-items: center;
  justify-content: center;
  margin-top: -4px;
}
.count {
  position: absolute;
  left: 18px;
  top: 23px;
  width: 18px;
  height: 16px;
  line-height: 14px;
  text-align: center;
  box-sizing: border-box;
  border: 1px solid #999;
  border-radius: 50%;
  background: #3b3031;
  font-size: 11px;
}
```
